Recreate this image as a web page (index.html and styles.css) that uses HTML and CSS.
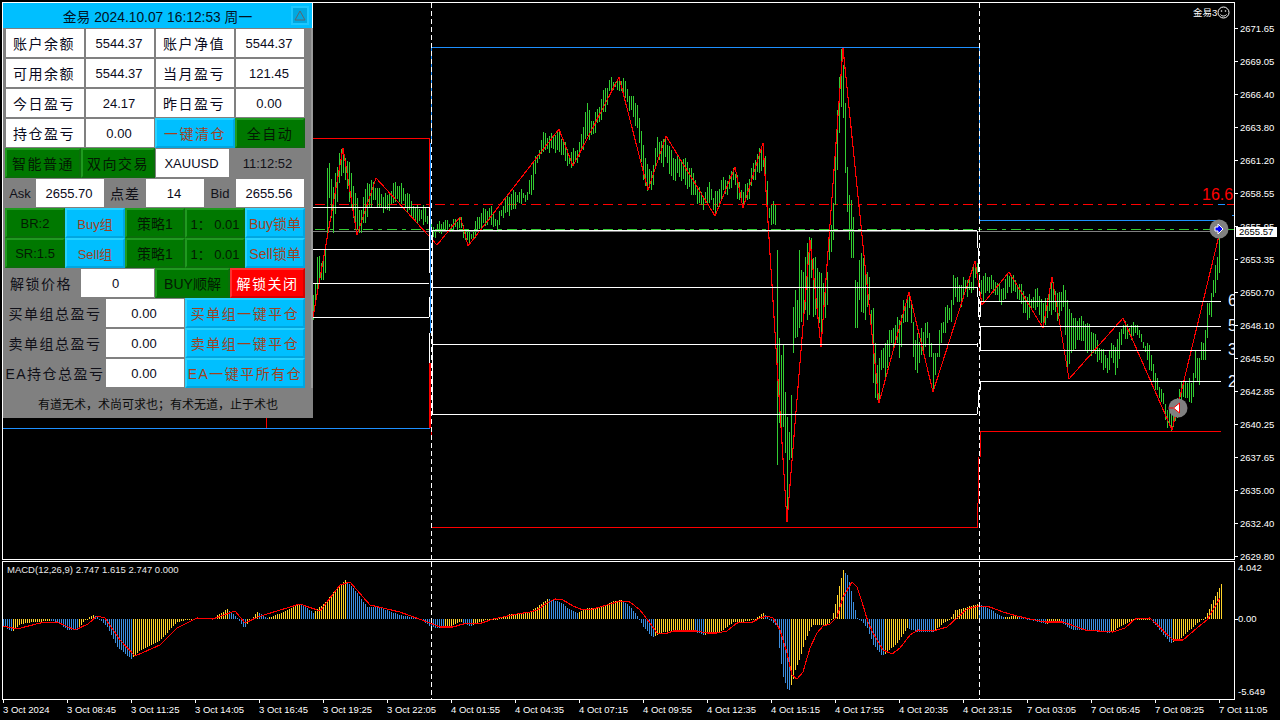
FILE: index.html
```html
<!DOCTYPE html>
<html lang="zh">
<head>
<meta charset="utf-8">
<title>XAUUSD</title>
<link rel="stylesheet" href="styles.css">
</head>
<body>
<div class="terminal">
  <div class="panes">
    <div class="pane pane-price">
      <svg class="chart" viewBox="3 3 1231 556" width="1231" height="556">
        <path class="s-grey" d="M313 231.5H1222"/>
        <path class="s-green dashdot" d="M315 229.5H1234"/>
        <path class="s-red dashdot" d="M315 204.5H1234"/>
        <path id="price-bars" class="s-bar"/>
        <path id="price-zigzag" class="s-zig"/>
        <path class="s-red" d="M3 138.5H430M429.5 139V207M429.5 363V428M430.5 363V428M431.5 430V440M266.5 418V428"/>
        <path class="s-blue" d="M3 428.5H430M431.5 47V143M430.5 143V333M432 47.5H979M979.5 47V220M979 220.5H1222M1218 204.5H1225M1232 215.5H1234"/>
        <path class="s-white" d="M3 207.5H429M3 249.5H429M3 283.5H429M3 317.5H429M429.5 207V273M429.5 297V317M429.5 333V363"/>
        <path class="s-white" d="M432 230.5H977M432 287.5H977M432 344.5H977M432 414.5H977M432.5 230V414M977.5 231V248M978.5 248V272M977.5 287V297M978.5 297V317M977.5 343V347M978.5 390V407M977.5 407V414"/>
        <path class="s-red" d="M432 527.5H978M978.5 457V503M977.5 503V528M980 431.5H1221M980.5 431V457"/>
        <path class="s-white" d="M980 301.5H1221M980 326.5H1221M980 350.5H1221M980 381.5H1221M980.5 301V317M980.5 326V350M980.5 381V390"/>
        <path class="s-white period" d="M431.5 3V559M979.5 3V559"/>
        <text class="big-number red-number" x="1202" y="200">16.6</text>
        <text class="big-number" x="1228" y="306">6</text>
        <text class="big-number" x="1228" y="331">5</text>
        <text class="big-number" x="1228" y="355">3</text>
        <text class="big-number" x="1228" y="387">2</text>
        <text class="expert-name" x="1193" y="16">金易3</text>
        <g class="smooth">
          <circle class="smiley" cx="1223.5" cy="12.5" r="5.5"/>
          <path class="smile" d="M1220.5 14.5c1.5 2 4.5 2 6 0"/>
          <circle class="eye" cx="1221.5" cy="11" r=".8"/>
          <circle class="eye" cx="1225.5" cy="11" r=".8"/>
          <circle class="marker" cx="1219" cy="229" r="9.5"/>
          <path class="arrow-blue" d="M1215 227h3v-3l5 5-5 5v-3h-3z"/>
          <circle class="marker" cx="1178" cy="408" r="9.5"/>
          <path class="arrow-white" d="M1173.5 408l6-5v10z"/>
          <path class="s-red" d="M1169 408h4"/>
        </g>
      </svg>
    </div>
    <div class="pane pane-macd">
      <svg class="chart" viewBox="3 562 1231 137" width="1231" height="137">
        <path id="macd-yellow" class="s-yellow"/>
        <path id="macd-blue" class="s-hist"/>
        <path id="macd-signal" class="s-zig"/>
        <path class="s-white period" d="M431.5 562V699M979.5 562V699"/>
      </svg>
      <span class="indicator-label">MACD(12,26,9) 2.747 1.615 2.747 0.000</span>
    </div>
    <div class="time-axis">
      <span class="time-tick">3 Oct 2024</span>
      <span class="time-tick">3 Oct 08:45</span>
      <span class="time-tick">3 Oct 11:25</span>
      <span class="time-tick">3 Oct 14:05</span>
      <span class="time-tick">3 Oct 16:45</span>
      <span class="time-tick">3 Oct 19:25</span>
      <span class="time-tick">3 Oct 22:05</span>
      <span class="time-tick">4 Oct 01:55</span>
      <span class="time-tick">4 Oct 04:35</span>
      <span class="time-tick">4 Oct 07:15</span>
      <span class="time-tick">4 Oct 09:55</span>
      <span class="time-tick">4 Oct 12:35</span>
      <span class="time-tick">4 Oct 15:15</span>
      <span class="time-tick">4 Oct 17:55</span>
      <span class="time-tick">4 Oct 20:35</span>
      <span class="time-tick">4 Oct 23:15</span>
      <span class="time-tick">7 Oct 03:05</span>
      <span class="time-tick">7 Oct 05:45</span>
      <span class="time-tick">7 Oct 08:25</span>
      <span class="time-tick">7 Oct 11:05</span>
    </div>
  </div>

  <div class="axes">
    <div class="price-axis">
      <span class="price-tick">2671.65</span>
      <span class="price-tick">2669.05</span>
      <span class="price-tick">2666.40</span>
      <span class="price-tick">2663.80</span>
      <span class="price-tick">2661.20</span>
      <span class="price-tick">2658.55</span>
      <span class="price-tick">2655.95</span>
      <span class="price-tick">2653.35</span>
      <span class="price-tick">2650.70</span>
      <span class="price-tick">2648.10</span>
      <span class="price-tick">2645.50</span>
      <span class="price-tick">2642.85</span>
      <span class="price-tick">2640.25</span>
      <span class="price-tick">2637.65</span>
      <span class="price-tick">2635.00</span>
      <span class="price-tick">2632.40</span>
      <span class="price-tick">2629.80</span>
      <span class="price-tag">2655.57</span>
    </div>
    <div class="macd-axis">
      <span class="macd-value">4.042</span>
      <span class="macd-value macd-zero">0.00</span>
      <span class="macd-value macd-min">-5.649</span>
    </div>
  </div>

  <aside class="panel">
    <header class="panel-title">
      <span class="panel-title-text">金易 2024.10.07 16:12:53 周一</span>
      <span class="collapse">
        <svg width="12" height="11" viewBox="0 0 12 11"><path class="collapse-icon" d="M6 1L11 10H1Z"/></svg>
      </span>
    </header>
    <div class="panel-body">
      <div class="row cols-account">
        <span class="cell field wide">账户余额</span><span class="cell field">5544.37</span>
        <span class="cell field wide">账户净值</span><span class="cell field">5544.37</span>
      </div>
      <div class="row cols-account">
        <span class="cell field wide">可用余额</span><span class="cell field">5544.37</span>
        <span class="cell field wide">当月盈亏</span><span class="cell field">121.45</span>
      </div>
      <div class="row cols-account">
        <span class="cell field wide">今日盈亏</span><span class="cell field">24.17</span>
        <span class="cell field wide">昨日盈亏</span><span class="cell field">0.00</span>
      </div>
      <div class="row cols-account">
        <span class="cell field wide">持仓盈亏</span><span class="cell field">0.00</span>
        <span class="cell btn btn-blue wide">一键清仓</span><span class="cell btn btn-green wide">全自动</span>
      </div>
      <div class="row cols-mode">
        <span class="cell btn btn-green wide">智能普通</span><span class="cell btn btn-green wide">双向交易</span>
        <span class="cell field">XAUUSD</span><span class="cell text">11:12:52</span>
      </div>
      <div class="row cols-quote">
        <span class="cell text">Ask</span><span class="cell field">2655.70</span>
        <span class="cell text wide-cjk">点差</span><span class="cell field">14</span>
        <span class="cell text">Bid</span><span class="cell field">2655.56</span>
      </div>
      <div class="row cols-five">
        <span class="cell btn btn-green">BR:2</span><span class="cell btn btn-blue">Buy组</span>
        <span class="cell btn btn-green cjk">策略1</span><span class="cell btn btn-green">1： 0.01</span>
        <span class="cell btn btn-blue cjk">Buy锁单</span>
      </div>
      <div class="row cols-five">
        <span class="cell btn btn-green">SR:1.5</span><span class="cell btn btn-blue">Sell组</span>
        <span class="cell btn btn-green cjk">策略1</span><span class="cell btn btn-green">1： 0.01</span>
        <span class="cell btn btn-blue cjk">Sell锁单</span>
      </div>
      <div class="row cols-four">
        <span class="cell text wide left-shift">解锁价格</span><span class="cell field field-zero">0</span>
        <span class="cell btn btn-green cjk">BUY顺解</span><span class="cell btn btn-red wide">解锁关闭</span>
      </div>
      <div class="row cols-group">
        <span class="cell text wide">买单组总盈亏</span><span class="cell field">0.00</span>
        <span class="cell btn btn-blue wide">买单组一键平仓</span>
      </div>
      <div class="row cols-group">
        <span class="cell text wide">卖单组总盈亏</span><span class="cell field">0.00</span>
        <span class="cell btn btn-blue wide">卖单组一键平仓</span>
      </div>
      <div class="row cols-group">
        <span class="cell text wide">EA持仓总盈亏</span><span class="cell field">0.00</span>
        <span class="cell btn btn-blue wide">EA一键平所有仓</span>
      </div>
    </div>
    <footer class="panel-footer">有道无术，术尚可求也；有术无道，止于术也</footer>
  </aside>
</div>
<script src="chart.js"></script>
</body>
</html>
```

FILE: styles.css
```css
* { box-sizing: border-box; }
html, body { margin: 0; background: #000; }
body { width: 1280px; height: 720px; overflow: hidden; font-family: "Liberation Sans", "Noto Sans CJK SC", sans-serif; }

.terminal { position: relative; display: flex; width: 1280px; height: 720px; padding: 2px 0 0 2px; background: #000; color: #fff; }

.panes { display: flex; flex-direction: column; width: 1233px; flex: none; }
.pane { position: relative; border: 1px solid #fff; background: #000; }
.pane-price { height: 558px; }
.pane-macd { height: 139px; margin-top: 1px; }
.chart { display: block; shape-rendering: crispEdges; overflow: hidden; }
.chart path { fill: none; stroke-width: 1; }
.chart .smooth { shape-rendering: auto; }

.s-bar { stroke: #32cd32; }
.s-zig { stroke: #f00; }
.chart .s-zig { stroke-width: 1.1; }
.s-red { stroke: #f00; }
.s-blue { stroke: #1e90ff; }
.s-white { stroke: #fff; }
.s-grey { stroke: #808080; }
.s-green { stroke: #32cd32; }
.s-yellow { stroke: #ffd42a; }
.s-hist { stroke: #3d8fe0; }
.dashdot { stroke-dasharray: 10 5 4 5; }
.period { stroke-dasharray: 5 3; }

.big-number { font-size: 16px; fill: #e8f0ff; }
.red-number { fill: #f00; }
.expert-name { font-size: 9.5px; fill: #fff; }
.chart .smiley { fill: none; stroke: #fff; stroke-width: 1; }
.chart .smile { stroke: #fff; }
.eye { fill: #fff; }
.marker { fill: #808080; }
.chart .arrow-blue { fill: #00f; stroke: #fff; }
.chart .arrow-white { fill: #fff; stroke: #f00; }

.indicator-label { position: absolute; left: 4px; top: 2px; font-size: 9.5px; line-height: 12px; color: #e8e8e8; }

.time-axis { display: flex; padding-left: 1px; height: 20px; }
.time-tick {
  flex: none; width: 64px; padding-top: 5px; font-size: 9.5px; line-height: 10px; white-space: nowrap;
  background: linear-gradient(#fff, #fff) 0 0 / 1px 3px no-repeat;
}

.axes { display: flex; flex-direction: column; width: 45px; flex: none; }
.price-axis { position: relative; display: flex; flex-direction: column; height: 559px; padding-top: 10px; }
.price-tick {
  flex: none; height: 33px; line-height: 33px; padding-left: 5px; font-size: 9.5px;
  background: linear-gradient(#fff, #fff) 0 50% / 3px 1px no-repeat;
}
.price-tag { position: absolute; left: 1px; top: 225px; width: 41px; height: 10px; padding-left: 3px; background: #fff; color: #000; font-size: 9.5px; line-height: 10px; }
.macd-axis { display: flex; flex-direction: column; padding-left: 3px; }
.macd-value { height: 14px; line-height: 14px; font-size: 9.5px; }
.macd-zero { margin-top: 37px; margin-left: -3px; padding-left: 3px; background: linear-gradient(#fff, #fff) 0 50% / 3px 1px no-repeat; }
.macd-min { margin-top: 59px; }

.panel { position: absolute; left: 3px; top: 3px; width: 310px; height: 415px; display: flex; flex-direction: column; background: #808080; color: #000; }
.panel-title { display: flex; align-items: center; justify-content: center; position: relative; height: 25px; flex: none; background: #00bfff; border-right: 1px solid #fff; }
.panel-title-text { font-size: 13.8px; color: #02131f; }
.collapse { position: absolute; right: 3px; top: 3px; width: 18px; height: 19px; display: flex; align-items: center; justify-content: center; background: #00a8e0; border: 2px solid #1cc8ff; }
.collapse svg { display: block; }
.collapse-icon { fill: none; stroke: #5c6670; stroke-width: 1; }

.panel-body { display: grid; grid-auto-rows: 30px; padding-left: 2px; height: 360px; flex: none; border-right: 2px solid #9a9a9a; width: 310px; }
.row { display: grid; height: 30px; }
.cols-account { grid-template-columns: 80px 70px 80px 70px; }
.cols-mode { grid-template-columns: 76px 74px 75px 75px; }
.cols-quote { grid-template-columns: 30px 70px 40px 60px 30px 70px; }
.cols-five { grid-template-columns: repeat(5, 60px); }
.cols-four { grid-template-columns: repeat(4, 75px); }
.cols-group { grid-template-columns: 100px 80px 120px; }

.cell { display: flex; align-items: center; justify-content: center; font-size: 13px; white-space: nowrap; color: #0a0a20; }
.field { background: #fff; margin: 1px; padding-right: 2px; }
.field-zero { padding-right: 4px; }
.left-shift { padding-right: 3px; }
.text { color: #101018; }
.wide { font-size: 14px; letter-spacing: 1.5px; }
.wide-cjk { font-size: 14px; letter-spacing: 1px; }
.cjk { font-size: 14px; }
.btn { border: 2px solid; }
.btn-green { background: #007800; border-color: #1f9a1f #0a6e0a #0a6e0a #1f9a1f; color: #031a03; }
.btn-blue { background: #00bfff; border-color: #26d2ff #00a6e0 #00a6e0 #26d2ff; color: #a0421e; }
.btn-red { background: #f00; border-color: #ff3030 #d80000 #d80000 #ff3030; color: #fff; }

.panel-footer { flex: 1; display: flex; align-items: center; justify-content: center; font-size: 12px; color: #0b0b0b; }
```

FILE: chart.js
```js
(function () {
  var BARS = [[313,295,320],[315,283,300],[317,257,295],[319,256,280],[321,263,280],[323,258,280],[325,250,273],[327,168,235],[329,163,198],[331,179,218],[333,187,233],[339,153,183],[343,150,173],[350,168,203],[355,193,230],[360,212,233],[367,183,217],[373,182,200],[380,193,210],[387,195,210],[395,182,202],[402,187,202],[408,195,212],[415,207,220],[425,208,222],[433,227,237],[443,222,230],[452,222,230],[460,217,228],[465,230,240],[470,235,243],[480,212,227],[490,207,222],[497,220,232],[502,205,215],[510,193,213],[518,192,203],[527,192,200],[533,163,190],[537,155,163],[543,132,152],[550,137,150],[557,130,150],[563,140,155],[568,152,167],[577,150,163],[582,133,150],[586,102,137],[592,122,137],[598,107,123],[605,88,112],[610,80,90],[617,80,90],[623,78,95],[628,92,105],[637,105,128],[640,127,150],[643,145,180],[648,172,192],[653,165,185],[657,137,157],[662,143,167],[665,138,157],[672,155,182],[678,160,175],[685,158,185],[693,173,195],[702,197,208],[707,187,203],[710,180,198],[713,198,210],[718,188,210],[723,177,190],[728,180,195],[733,168,180],[738,180,200],[743,192,205],[748,180,200],[753,163,180],[758,150,173],[763,152,167],[766,157,202],[768,210,220],[772,200,223],[775,205,225],
  [777,250,465],[779,338,423],[781,355,427],[783,345,427],[785,392,453],[787,417,520],[789,432,460],[791,395,458],[793,307,353],[795,290,338],[797,300,337],[799,250,328],[801,270,322],[803,272,322],[805,257,310],[807,243,320],[809,237,315],[811,238,278],[813,258,317],[815,257,315],[817,268,313],[819,272,323],[821,273,338],[823,283,317],[825,278,318],[827,272,305],[829,227,260],[831,225,252],[833,203,240],[835,150,205],[837,110,170],[839,77,133],[841,49,107],[843,65,118],[845,103,173],[847,167,212],[849,195,240],[851,200,258],[853,217,258],[855,280,328],[857,282,328],[859,260,300],[861,253,312],[863,258,313],[865,272,320],[867,272,307],[869,277,300],[871,310,330],[873,308,383],[875,343,398],[877,365,400],[879,358,400],[881,350,370],[883,348,368],[885,343,377],[887,340,368],[889,330,357],[891,330,343],[893,328,347],[895,325,343],[897,317,343],[899,320,358],[901,315,347],[903,300,323],[905,307,322],[907,295,322],[909,295,308],[911,300,323],[913,322,357],[915,340,370],[917,333,373],[919,342,363],[921,328,355],[923,332,353],[925,323,347],[927,322,338],[929,333,357],[931,343,357],[933,353,390],[935,353,375],[937,353,357],[939,330,357],[941,323,343],[943,322,333],[945,307,333],[947,305,323],[949,308,320],[951,300,322],[953,275,305],[955,278,297],[957,277,302],[959,285,302],[961,285,307],[963,277,297],[965,280,292],[967,280,297],[969,280,290],[971,282,293],[973,267,290],[975,263,278],[977,263,280],
  [982,282,300],[985,273,293],[990,277,290],[995,282,295],[1002,288,305],[1008,273,290],[1015,280,292],[1020,285,303],[1027,297,320],[1032,297,308],[1037,288,307],[1043,303,328],[1048,293,315],[1053,282,310],[1058,297,320],[1063,285,307],[1067,300,367],[1073,318,350],[1080,318,337],[1087,323,353],[1093,333,353],[1100,347,363],[1107,358,373],[1112,343,358],[1116,345,378],[1122,323,337],[1128,325,338],[1137,325,335],[1143,342,348],[1150,347,370],[1155,373,390],[1162,392,402],[1167,410,428],[1172,413,430],[1177,398,418],[1181,382,405],[1183,383,397],[1185,382,398],[1187,383,398],[1189,378,402],[1191,383,403],[1193,373,397],[1195,350,378],[1197,358,382],[1199,358,385],[1201,342,360],[1203,343,360],[1205,330,360],[1207,303,338],[1209,303,315],[1211,293,317],[1213,280,297],[1215,265,293],[1217,257,280],[1219,233,273]];

  var ZIGZAG = [[313,317],[325,250],[343,148],[357,235],[376,178],[428,235],[437,245],[460,217],[463,226],[468,246],[559,129],[573,166],[619,77],[648,190],[666,136],[715,216],[735,167],[743,208],[763,143],[787,522],[810,240],[821,347],[843,48],[879,403],[909,292],[933,392],[975,261],[982,305],[1009,272],[1043,328],[1052,277],[1069,379],[1123,318],[1172,430],[1222,223]];

  var HIST = [[3,626],[12,632],[20,624],[33,622],[50,621],[57,622],[67,630],[78,630],[83,622],[88,618],[93,615],[98,618],[107,627],[117,647],[131,659],[140,650],[160,640],[177,622],[197,618],[213,618],[227,609],[237,618],[244,628],[250,620],[257,612],[267,618],[283,612],[300,603],[313,613],[327,600],[333,592],[345,580],[353,588],[367,607],[377,607],[400,615],[420,619],[431,627],[438,628],[443,628],[453,625],[460,622],[470,626],[480,622],[487,619],[497,619],[510,614],[527,613],[537,607],[547,599],[560,602],[570,610],[577,613],[587,608],[603,607],[613,601],[622,600],[630,607],[638,617],[643,627],[652,637],[660,633],[670,631],[693,631],[703,635],[715,633],[723,630],[733,622],[740,622],[753,620],[760,615],[763,613],[768,618],[777,627],[780,658],[783,677],[788,692],[792,683],[795,670],[800,657],[805,640],[812,625],[820,625],[828,625],[832,617],[837,595],[840,582],[843,570],[847,575],[850,585],[853,602],[857,618],[860,620],[867,628],[873,645],[882,656],[888,651],[897,643],[907,628],[917,632],[933,632],[943,623],[950,619],[955,610],[967,607],[978,604],[987,608],[1003,617],[1017,616],[1030,620],[1045,624],[1060,622],[1072,630],[1083,630],[1110,633],[1122,625],[1135,619],[1150,619],[1170,643],[1182,637],[1197,623],[1205,617],[1213,600],[1222,582]];

  var SIGNAL = [[3,626],[17,629],[40,623],[57,622],[75,630],[88,624],[97,616],[105,618],[120,640],[135,656],[160,645],[177,628],[197,618],[213,619],[235,611],[245,623],[258,617],[267,614],[300,604],[320,611],[340,585],[350,582],[370,605],[400,612],[430,623],[440,627],[453,627],[463,624],[482,623],[493,619],[503,617],[517,614],[530,612],[537,610],[547,603],[555,599],[563,600],[573,606],[583,610],[593,609],[607,605],[620,601],[630,602],[640,610],[650,623],[657,633],[665,634],[673,631],[697,631],[707,633],[717,633],[727,631],[737,623],[753,622],[760,618],[767,616],[773,618],[780,630],[787,653],[792,675],[797,679],[803,672],[810,648],[817,633],[823,626],[830,624],[837,617],[843,597],[852,582],[857,587],[862,602],[868,622],[873,633],[883,650],[892,654],[900,648],[910,635],[918,630],[933,631],[947,627],[957,618],[967,609],[978,606],[990,607],[1003,612],[1017,616],[1030,619],[1045,622],[1063,622],[1085,630],[1113,632],[1125,628],[1135,619],[1150,618],[1173,640],[1183,640],[1197,628],[1207,620],[1220,598]];

  function at(table, x, col) {
    var i = 1;
    while (i < table.length - 1 && table[i][0] < x) i++;
    var a = table[i - 1], b = table[i];
    var k = (x - a[0]) / (b[0] - a[0]);
    return a[col] + (b[col] - a[col]) * k;
  }

  function pointsPath(points) {
    return points.map(function (p, i) { return (i ? "L" : "M") + p[0] + " " + p[1]; }).join("");
  }

  var bars = "";
  for (var x = 313; x <= 1219; x += 2) {
    var top = at(BARS, x, 1), bottom = at(BARS, x, 2);
    var known = BARS.some(function (row) { return row[0] === x; });
    if (!known) {
      top += 3 * Math.sin(x * 2.3);
      bottom += 3 * Math.sin(x * 1.1 + 1);
    }
    bars += "M" + (x + 0.5) + " " + Math.round(top) + "V" + Math.round(bottom);
  }
  document.getElementById("price-bars").setAttribute("d", bars);
  document.getElementById("price-zigzag").setAttribute("d", pointsPath(ZIGZAG));

  var zero = 619, yellow = "", blue = "", rising = false, prev = null;
  for (var hx = 3; hx <= 1221; hx += 2) {
    var tip = at(HIST, hx, 1);
    if (prev !== null && Math.abs(tip - prev) > 0.05) rising = tip < prev;
    prev = tip;
    var rounded = Math.round(tip);
    var seg = "M" + (hx + 0.5) + " " + zero + "V" + (rounded === zero ? zero + 1 : rounded);
    if (rising) yellow += seg; else blue += seg;
  }
  document.getElementById("macd-yellow").setAttribute("d", yellow);
  document.getElementById("macd-blue").setAttribute("d", blue);
  document.getElementById("macd-signal").setAttribute("d", pointsPath(SIGNAL));
})();
```
